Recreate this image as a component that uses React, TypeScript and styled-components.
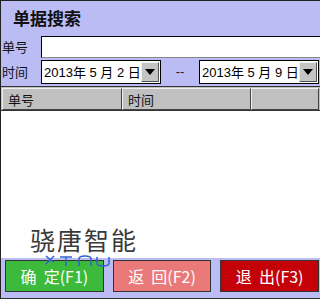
import React from "react";
import styled, { createGlobalStyle } from "styled-components";

const Global = createGlobalStyle`
  html, body { margin: 0; padding: 0; }
  body { font-family: "Liberation Sans", "Noto Sans CJK SC", sans-serif; }
`;

const Screen = styled.div`
  width: 320px;
  height: 299px;
  box-sizing: border-box;
  background: #bcbcf4;
  border-top: 1px solid #222;
  border-left: 1px solid #222;
  display: flex;
  flex-direction: column;
  overflow: hidden;
`;

const Title = styled.div`
  height: 33px;
  padding-left: 12px;
  display: flex;
  align-items: center;
  font-family: "Noto Sans CJK SC", sans-serif;
  font-weight: 700;
  font-size: 17px;
  color: #111;
`;

const Row = styled.div`
  display: flex;
  align-items: center;
  height: 25px;
  padding-left: 1px;
`;

const Label = styled.span`
  width: 39px;
  font-family: "Noto Sans CJK SC", sans-serif;
  font-size: 13px;
  color: #111;
`;

const TextField = styled.div`
  flex: 1;
  height: 22px;
  box-sizing: border-box;
  background: #fff;
  border-top: 1px solid #000;
  border-left: 1px solid #000;
  border-bottom: 1px solid #888;
`;

const DateBox = styled.div`
  width: 120px;
  height: 24px;
  box-sizing: border-box;
  background: #fff;
  border: 1px solid #000;
  display: flex;
  align-items: center;
  font-size: 13px;
  color: #000;
  padding-left: 2px;
`;

const DateText = styled.span`
  flex: 1;
  white-space: pre;
  font-family: "Liberation Sans", "Noto Sans CJK SC", sans-serif;
`;

const Arrow = styled.div`
  width: 18px;
  height: 20px;
  box-sizing: border-box;
  background: #c4c4c4;
  border: 1px solid;
  border-color: #eee #555 #555 #eee;
  display: flex;
  align-items: center;
  justify-content: center;
  margin-right: 1px;
`;

const Dash = styled.span`
  width: 38px;
  text-align: center;
  font-size: 13px;
  color: #222;
`;

const Table = styled.div`
  margin-top: 2px;
  flex: 1;
  display: flex;
  flex-direction: column;
  border-top: 1px solid #333;
`;

const HeadRow = styled.div`
  display: flex;
  height: 22px;
  background: #c0c0c0;
  border-bottom: 1px solid #333;
  padding: 1px 0 0 1px;
`;

const HeadCell = styled.div<{ $w: number }>`
  width: ${(p) => p.$w}px;
  box-sizing: border-box;
  border: 1px solid;
  border-color: #f0f0f0 #444 #444 #f0f0f0;
  display: flex;
  align-items: center;
  padding-left: 5px;
  font-family: "Noto Sans CJK SC", sans-serif;
  font-size: 13px;
  color: #111;
`;

const Body = styled.div`
  flex: 1;
  background: #fff;
  display: flex;
  flex-direction: column;
  align-items: flex-start;
  justify-content: flex-end;
  padding-left: 29px;
`;

const Brand = styled.div`
  font-family: "Noto Sans CJK SC", sans-serif;
  font-size: 25px;
  line-height: 26px;
  color: #3a3a3a;
  letter-spacing: 2px;
  margin-bottom: 2px;
`;

const Mark = styled.svg`
  display: block;
  flex-shrink: 0;
  margin-left: 15px;
  margin-bottom: -10px;
  position: relative;
  z-index: 1;
`;

const Footer = styled.div`
  height: 41px;
  display: flex;
  align-items: flex-start;
  gap: 9px;
  padding: 2px 1px 0 4px;
  border-bottom: 1px solid #333;
  box-sizing: border-box;
`;

const Btn = styled.div<{ $bg: string }>`
  flex: 1;
  height: 32px;
  box-sizing: border-box;
  background: ${(p) => p.$bg};
  border: 1px solid #333;
  display: flex;
  align-items: center;
  justify-content: center;
  color: #fff;
  font-size: 16px;
  font-family: "Noto Sans CJK SC", sans-serif;
  white-space: pre;
`;

const ArrowIcon = () => (
  <svg width="10" height="6" viewBox="0 0 10 6">
    <path d="M0 0 H10 L5 6 Z" fill="#000" />
  </svg>
);

const Picker = ({ day }: { day: number }) => (
  <DateBox>
    <DateText>{`2013年 5 月 ${day} 日`}</DateText>
    <Arrow>
      <ArrowIcon />
    </Arrow>
  </DateBox>
);

export default function App() {
  return (
    <>
      <Global />
      <Screen>
        <Title>单据搜索</Title>
        <Row>
          <Label>单号</Label>
          <TextField />
        </Row>
        <Row>
          <Label>时间</Label>
          <Picker day={2} />
          <Dash>--</Dash>
          <Picker day={9} />
        </Row>
        <Table>
          <HeadRow>
            <HeadCell $w={120}>单号</HeadCell>
            <HeadCell $w={129}>时间</HeadCell>
            <HeadCell $w={68} />
          </HeadRow>
          <Body>
            <Brand>骁唐智能</Brand>
            <Mark width="78" height="14" viewBox="0 0 78 14">
              <g fill="none" stroke="#2f62d4" strokeWidth="1.5">
                <path d="M1 2 Q5 6 9 8 M9 2 Q5 6 1 10" />
                <path d="M15 3 H27 M21 3 V12" />
                <path d="M34 12 V5 Q34 2 40 2 Q46 2 46 5 V12" />
                <path d="M52 3 V9 Q52 12 58 12 Q64 12 64 9 V3" />
              </g>
            </Mark>
          </Body>
        </Table>
        <Footer>
          <Btn $bg="#3cba3c">{"确  定(F1)"}</Btn>
          <Btn $bg="#ea7a7a">{"返  回(F2)"}</Btn>
          <Btn $bg="#c40008">{"退  出(F3)"}</Btn>
        </Footer>
      </Screen>
    </>
  );
}
